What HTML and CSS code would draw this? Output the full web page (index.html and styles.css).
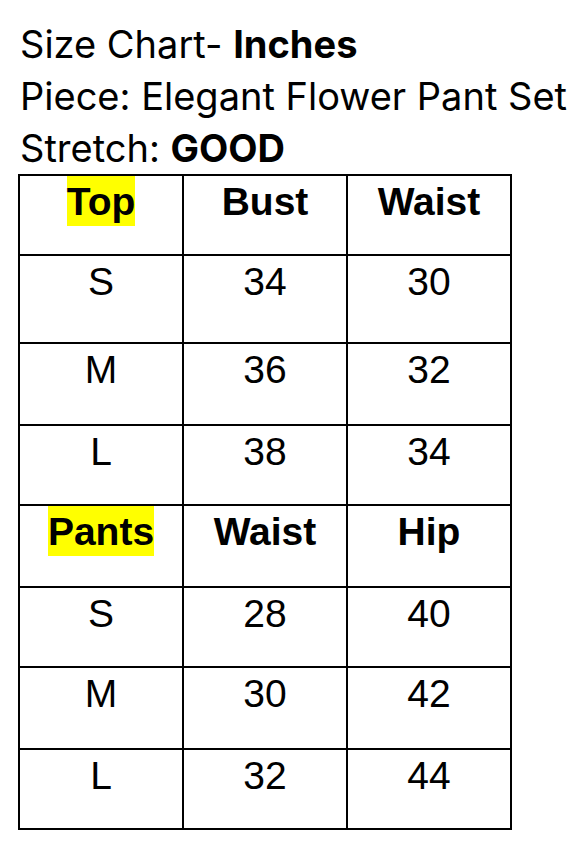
FILE: index.html
```html
<!DOCTYPE html>
<html lang="en">
<head>
<meta charset="utf-8">
<title>Size Chart</title>
<link rel="stylesheet" href="styles.css">
</head>
<body>
<div class="page">
  <div class="info">
    <p class="line">Size Chart- <b>Inches</b></p>
    <p class="line">Piece: Elegant Flower Pant Set</p>
    <p class="line">Stretch: <b>GOOD</b></p>
  </div>
  <div class="chart">
    <div class="cell head r1"><span class="hl">Top</span></div>
    <div class="cell head r1">Bust</div>
    <div class="cell head r1">Waist</div>

    <div class="cell r2">S</div>
    <div class="cell r2">34</div>
    <div class="cell r2">30</div>

    <div class="cell r3">M</div>
    <div class="cell r3">36</div>
    <div class="cell r3">32</div>

    <div class="cell r4">L</div>
    <div class="cell r4">38</div>
    <div class="cell r4">34</div>

    <div class="cell head r5"><span class="hl">Pants</span></div>
    <div class="cell head r5">Waist</div>
    <div class="cell head r5">Hip</div>

    <div class="cell r6">S</div>
    <div class="cell r6">28</div>
    <div class="cell r6">40</div>

    <div class="cell r7">M</div>
    <div class="cell r7">30</div>
    <div class="cell r7">42</div>

    <div class="cell r8">L</div>
    <div class="cell r8">32</div>
    <div class="cell r8">44</div>
  </div>
</div>
</body>
</html>
```
FILE: styles.css
```css
* { box-sizing: border-box; }
html, body {
  margin: 0;
  padding: 0;
  background: #ffffff;
  color: #000000;
}
.page {
  padding: 18px 0 0 18px;
}
.info {
  font-family: Inter, "Liberation Sans", sans-serif;
  font-size: 38px;
  line-height: 52px;
  height: 156px;
}
.line {
  margin: 0;
  padding-left: 2px;
  white-space: nowrap;
}
.line b { font-weight: 700; }
.chart {
  display: grid;
  grid-template-columns: 164px 164px 164px;
  width: 494px;
  border-left: 2px solid #000;
  border-top: 2px solid #000;
  font-family: "Liberation Sans", Arial, sans-serif;
  font-size: 39px;
}
.cell {
  border-right: 2px solid #000;
  border-bottom: 2px solid #000;
  text-align: center;
  padding-top: 4px;
  line-height: normal;
}
.head { font-weight: 700; }
.hl {
  background: #ffff00;
  padding: 4px 0 3px;
}
.r1, .r4, .r6, .r8 { height: 80px; }
.r2 { height: 88px; }
.r3, .r5, .r7 { height: 82px; }
```
